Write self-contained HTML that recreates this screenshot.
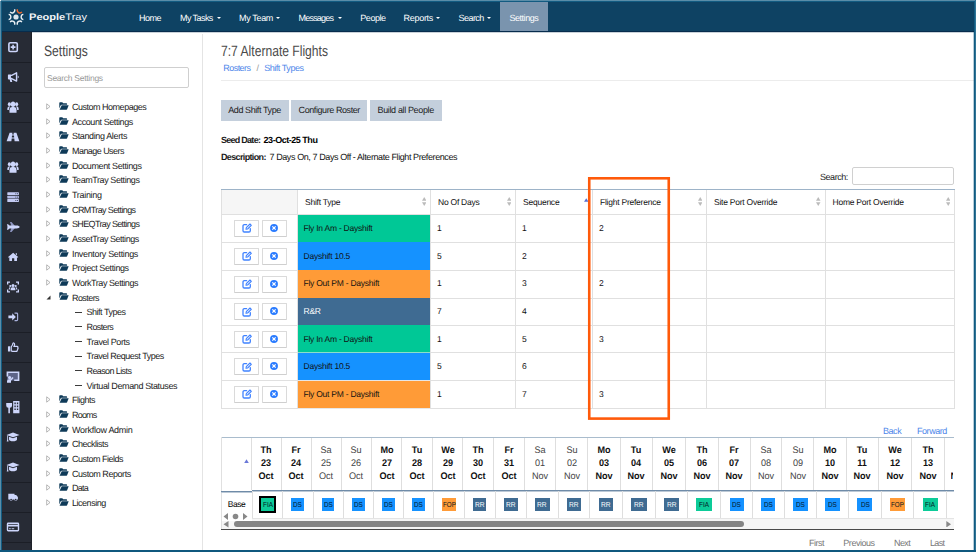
<!DOCTYPE html>
<html lang="en"><head><meta charset="utf-8"><title>PeopleTray - Settings - 7:7 Alternate Flights</title>
<style>
*{box-sizing:border-box;margin:0;padding:0}
html,body{width:976px;height:552px;overflow:hidden;background:#fff}
body{font-family:"Liberation Sans",sans-serif;color:#222;position:relative;text-rendering:geometricPrecision}
.abs{position:absolute}
.t{position:absolute;white-space:nowrap;line-height:1;transform-origin:0 50%}
.cab{font-size:9px;letter-spacing:-0.45px}
#nav{left:0;top:0;width:976px;height:32px;background:#0e4263}
#nav .t{color:#fff;font-size:9px;letter-spacing:-0.47px}
#side{left:0;top:32px;width:32px;height:520px;background:#272b35}
#side .c{position:absolute;left:0;width:32px;height:31px;border-bottom:1px solid #1b1e26}
#side svg{position:absolute;left:6px;top:8px;width:14px;height:14px;fill:#cdd6fb;stroke:none}
#panel{left:32px;top:32px;width:171px;height:520px;border-right:1px solid #e4e4e4;background:#fff}
.tree .t{color:#222}
.tbl{font-size:8.500px;letter-spacing:-0.240px;color:#111}
.cell{position:absolute;border-right:1px solid #ddd;border-bottom:1px solid #ddd}
.btn{position:absolute;background:#c4cfdc;height:21px;top:100px}
.abtn{position:absolute;width:25px;height:17px;border:1px solid #dadada;border-bottom-color:#cfcfcf;background:#fff;border-radius:1px}
.frame{position:absolute;z-index:50}
</style></head><body>

<div id="nav" class="abs">
<svg class="abs" style="left:6px;top:6.500px;width:20px;height:20px" viewBox="-10 -10 20 20"><circle cx="0" cy="0" r="2.600" fill="#dce6ee"/><path d="M7.34 2.57 A2.6 2.6 0 0 1 7.34 -2.57" fill="none" stroke="#eef3f7" stroke-width="1.350"/><path d="M1.44 7.64 A2.6 2.6 0 0 1 5.90 5.07" fill="none" stroke="#eef3f7" stroke-width="1.350"/><path d="M-5.90 5.07 A2.6 2.6 0 0 1 -1.44 7.64" fill="none" stroke="#eef3f7" stroke-width="1.350"/><path d="M-7.34 -2.57 A2.6 2.6 0 0 1 -7.34 2.57" fill="none" stroke="#eef3f7" stroke-width="1.350"/><path d="M-1.44 -7.64 A2.6 2.6 0 0 1 -5.90 -5.07" fill="none" stroke="#eef3f7" stroke-width="1.350"/><path d="M5.90 -5.07 A2.6 2.6 0 0 1 1.44 -7.64" fill="none" stroke="#f26a2e" stroke-width="1.350"/></svg>
<div class="t" style="left:28.700px;top:11.700px;font-size:9.400px;letter-spacing:0;transform:scaleX(1.18);color:#f2f5f8"><b>People</b>Tray</div>
<div class="abs" style="left:500px;top:2px;width:48px;height:29.5px;background:#7a94ae"></div>
<div class="abs" style="left:0;top:31px;width:976px;height:1px;background:#072c4d"></div>
<div class="abs" style="left:32px;top:32px;width:942px;height:1px;background:rgba(10,50,83,0.22);z-index:3"></div>
<div class="t" style="left:139px;top:13.900px;letter-spacing:-0.503px">Home</div>
<div class="t" style="left:180px;top:13.900px;letter-spacing:-0.577px">My Tasks</div>
<div class="abs" style="left:216.5px;top:16.800px;width:0;height:0;border-left:2px solid transparent;border-right:2px solid transparent;border-top:2.200px solid #fff"></div>
<div class="t" style="left:239px;top:13.900px;letter-spacing:-0.341px">My Team</div>
<div class="abs" style="left:276px;top:16.800px;width:0;height:0;border-left:2px solid transparent;border-right:2px solid transparent;border-top:2.200px solid #fff"></div>
<div class="t" style="left:298.5px;top:13.900px;letter-spacing:-0.789px">Messages</div>
<div class="abs" style="left:337.6px;top:16.800px;width:0;height:0;border-left:2px solid transparent;border-right:2px solid transparent;border-top:2.200px solid #fff"></div>
<div class="t" style="left:360.3px;top:13.900px;letter-spacing:-0.465px">People</div>
<div class="t" style="left:403.6px;top:13.900px;letter-spacing:-0.302px">Reports</div>
<div class="abs" style="left:436px;top:16.800px;width:0;height:0;border-left:2px solid transparent;border-right:2px solid transparent;border-top:2.200px solid #fff"></div>
<div class="t" style="left:458.6px;top:13.900px;letter-spacing:-0.563px">Search</div>
<div class="abs" style="left:487px;top:16.800px;width:0;height:0;border-left:2px solid transparent;border-right:2px solid transparent;border-top:2.200px solid #fff"></div>
<div class="t" style="left:509.4px;top:13.900px;letter-spacing:-0.446px">Settings</div>
</div>
<div id="side" class="abs">
<div class="abs" style="left:30.500px;top:0;width:1.500px;height:520px;background:#1e2129;z-index:2"></div>
<div class="c" style="top:0px"><svg viewBox="0 0 14 14"><rect x="2.900" y="2.700" width="8.400" height="8.800" rx="1.300" fill="none" stroke="#cdd6fb" stroke-width="1.600"/><path d="M6.300 4.700h1.600v1.600H9.500v1.600H7.900V9.500H6.300V7.900H4.700V6.300h1.600z"/></svg></div>
<div class="c" style="top:30px"><svg viewBox="0 0 14 14"><g transform="translate(.9 .8) scale(0.88)"><path d="M2 5.200h3.400L11 2.300v9.400L5.400 8.800H2z" fill="none" stroke="#cdd6fb" stroke-width="1.600" stroke-linejoin="round"/><rect x="1.200" y="4.400" width="3.400" height="5.200"/><path d="M3 9.200h2.200l.9 3.400H3.900z"/><path d="M12.300 5.400a1.700 1.700 0 0 1 0 3.200z"/></g></svg></div>
<div class="c" style="top:60px"><svg viewBox="0 0 14 14"><g transform="translate(.85 -.7) scale(0.88 1.1)"><circle cx="7" cy="4.600" r="2.500"/><circle cx="2.900" cy="4.400" r="1.800"/><circle cx="11.100" cy="4.400" r="1.800"/><path d="M3 12.200V10a3 3 0 0 1 3-3h2a3 3 0 0 1 3 3v2.200z"/><path d="M.6 9.800V8.600a2.300 2.300 0 0 1 3-2.100 4 4 0 0 0-1.300 3.300zM13.400 9.800V8.600a2.300 2.300 0 0 0-3-2.100 4 4 0 0 1 1.300 3.300z"/></g></svg></div>
<div class="c" style="top:90px"><svg viewBox="0 0 14 14"><path d="M3.6 2.8h2.8l-.2 1.6h1.6l-.2-1.6h2.8l3 8.4H8.6l-.3-2.6H5.7l-.3 2.6H.6z M6 5.4l-.2 2h2.4l-.2-2z" fill-rule="evenodd"/></svg></div>
<div class="c" style="top:120px"><svg viewBox="0 0 14 14"><g transform="translate(.85 -.7) scale(0.88 1.1)"><circle cx="7" cy="4.600" r="2.500"/><circle cx="2.900" cy="4.400" r="1.800"/><circle cx="11.100" cy="4.400" r="1.800"/><path d="M3 12.200V10a3 3 0 0 1 3-3h2a3 3 0 0 1 3 3v2.200z"/><path d="M.6 9.800V8.600a2.300 2.300 0 0 1 3-2.100 4 4 0 0 0-1.300 3.300zM13.400 9.800V8.600a2.300 2.300 0 0 0-3-2.100 4 4 0 0 1 1.300 3.300z"/></g></svg></div>
<div class="c" style="top:150px"><svg viewBox="0 0 14 14"><rect x="1.300" y="2.300" width="11.600" height="2.800" rx=".5" fill="#c3cbf3"/><rect x="1.300" y="5.700" width="11.600" height="2.800" rx=".5" fill="#b4bce6"/><rect x="1.300" y="9.100" width="11.600" height="2.800" rx=".5" fill="#c3cbf3"/><g fill="#4a5070"><rect x="9.300" y="3.200" width="1" height="1"/><rect x="11" y="3.200" width="1" height="1"/><rect x="9.300" y="6.600" width="1" height="1"/><rect x="11" y="6.600" width="1" height="1"/><rect x="9.300" y="10" width="1" height="1"/><rect x="11" y="10" width="1" height="1"/></g></svg></div>
<div class="c" style="top:180px"><svg viewBox="0 0 14 14"><path d="M5.400 6L4 1.900h1.500L9 6zM5.400 8L4 12.100h1.500L9 8z" fill="#8e96c2"/><path d="M2.200 5.600h8.400c1.600 0 3 .6 3 1.400s-1.400 1.400-3 1.400H2.200L1.500 7z"/><path d="M.9 4.300h1.300l1.300 1.500v2.400L2.200 9.700H.9L1.700 7z"/></svg></div>
<div class="c" style="top:210px"><svg viewBox="0 0 14 14"><g transform="translate(1.2 1) scale(0.85)"><path d="M7 2.2l6 5-.7.8-.8-.7v4.5H8.3V8.600H5.700v3.200H2.500V7.300l-.8.7L1 7.200z"/><path d="M10 2.600h1.500v2.300L10 3.700z"/></g></svg></div>
<div class="c" style="top:240px"><svg viewBox="0 0 14 14"><path d="M1 1.500h3v1.300H2.300V4.500H1zM13 1.500v3h-1.300V2.800H10V1.500zM1 12.500v-3h1.300v1.700H4v1.300zM13 12.500h-3v-1.300h1.700V9.500H13z"/><circle cx="7" cy="5.600" r="1.500"/><circle cx="4.300" cy="6" r="1.100"/><circle cx="9.700" cy="6" r="1.100"/><path d="M4.600 10.200V9a1.800 1.800 0 0 1 1.800-1.800h1.200A1.800 1.800 0 0 1 9.400 9v1.200zM2.800 9.600V8.800a1.500 1.500 0 0 1 1.700-1.400 2.600 2.600 0 0 0-.7 2.200zM11.200 9.600V8.800a1.500 1.500 0 0 0-1.700-1.400 2.600 2.600 0 0 1 .7 2.200z"/></svg></div>
<div class="c" style="top:270px"><svg viewBox="0 0 14 14"><g transform="translate(1.400 1.100) scale(0.83)"><path d="M5.800 2.600L10.200 7l-4.400 4.400V8.700H1.200V5.300h4.600z"/><path d="M8.600 1.800h2.600a1.800 1.800 0 0 1 1.800 1.800v6.800a1.800 1.800 0 0 1-1.800 1.800H8.600v-1.400h2.400a.6.600 0 0 0 .6-.6V3.800a.6.600 0 0 0-.6-.6H8.600z" fill="#aab2de"/></g></svg></div>
<div class="c" style="top:300px"><svg viewBox="0 0 14 14"><g transform="translate(1.100 1.200) scale(0.86)"><rect x="1" y="6" width="2.600" height="6" rx=".4"/><path d="M4.800 6.400c1.200-1 1.800-2.200 2-4 .1-.7 1.900-.5 1.900 1.200 0 .9-.3 1.700-.6 2.300h3.500c.8 0 1.300.9.900 1.600.4.500.3 1.200-.2 1.600.2.600 0 1.100-.5 1.400.1.800-.4 1.400-1.200 1.400H7.400c-.9 0-1.700-.3-2.600-.7z" fill="none" stroke="#cdd6fb" stroke-width="1.400"/></g></svg></div>
<div class="c" style="top:330px"><svg viewBox="0 0 14 14"><rect x="1.200" y="2.200" width="11.800" height="8.400" fill="#5d6488"/><path d="M.6 1.600h12.800v9.400H8.200V9.500h3.600V3.100H2.200v3.400H.6z"/><circle cx="3.600" cy="7.600" r="1.600"/><path d="M1 12.700v-1.400a2 2 0 0 1 2-2h1.400l2.200-2.200 1 1-2.600 2.700v1.900z"/></svg></div>
<div class="c" style="top:360px"><svg viewBox="0 0 14 14"><g transform="translate(-.9 -.8) scale(1.12)"><path d="M7.200 1.500h5.600v11H7.200z M8.300 3v1.500h1.200V3zM10.500 3v1.500h1.200V3zM8.300 5.600v1.500h1.200V5.600zM10.500 5.600v1.500h1.200V5.600zM8.300 8.200v1.500h1.200V8.200zM10.500 8.200v1.500h1.200V8.200z" fill-rule="evenodd"/><path d="M1 3.500h5.200v2.200a2 2 0 0 1-1.900 2v4.800H2.900V7.700a2 2 0 0 1-1.900-2z"/></g></svg></div>
<div class="c" style="top:390px"><svg viewBox="0 0 14 14"><path d="M7 2.500l6.500 2.400L7 7.300.5 4.900z"/><path d="M3 6.800l4 1.500 4-1.500v2.600c0 1-1.800 1.800-4 1.800s-4-.8-4-1.800z"/><path d="M1.200 5.600h.9v4l.5 1.900H.7l.5-1.900z"/></svg></div>
<div class="c" style="top:420px"><svg viewBox="0 0 14 14"><path d="M7 2.500l6.500 2.400L7 7.300.5 4.900z"/><path d="M3 6.800l4 1.500 4-1.500v2.600c0 1-1.800 1.800-4 1.800s-4-.8-4-1.800z"/><path d="M1.200 5.600h.9v4l.5 1.900H.7l.5-1.900z"/></svg></div>
<div class="c" style="top:450px"><svg viewBox="0 0 14 14"><g transform="translate(1.500 1.300) scale(0.8)"><path d="M1 3.200h7.800v1.400h2l2.200 2.500v3.100h-1a1.700 1.700 0 0 1-3.400 0H6.200a1.700 1.700 0 0 1-3.400 0H1z"/><circle cx="4.500" cy="10.300" r="1.100" fill="#272b35"/><circle cx="10.300" cy="10.300" r="1.100" fill="#272b35"/></g></svg></div>
<div class="c" style="top:480px"><svg viewBox="0 0 14 14"><path d="M2.200 2.500h9.600A1.400 1.400 0 0 1 13.200 3.900v6.200a1.400 1.400 0 0 1-1.400 1.400H2.200A1.400 1.400 0 0 1 .8 10.100V3.900a1.400 1.400 0 0 1 1.400-1.400z M2.200 6.600v3.500h9.600V6.600z M2.200 3.900v.9h9.600v-.9z" fill-rule="evenodd"/><rect x="3" y="8.300" width="1.800" height=".9"/><rect x="5.600" y="8.300" width="2.600" height=".9"/></svg></div>
</div>
<div id="panel" class="abs"></div><div class="abs" style="left:202px;top:32px;width:2px;height:2px;background:#fff"></div>
<div class="t" style="left:43.5px;top:43.900px;font-size:15px;color:#484848;transform:scaleX(0.81)">Settings</div>
<div class="abs" style="left:44px;top:67px;width:145px;height:20.500px;border:1px solid #cfcfcf;border-radius:2px"></div>
<div class="t" style="left:47px;top:74px;font-size:8.500px;letter-spacing:-0.280px;color:#999">Search Settings</div>
<div class="tree">
<svg class="abs" style="left:46px;top:103.00px;width:5px;height:7px" viewBox="0 0 5 7"><path d="M.7 .8L4 3.500.7 6.200z" fill="#fff" stroke="#999" stroke-width=".7"/></svg>
<svg class="abs" style="left:58.6px;top:101.90px;width:10px;height:8px" viewBox="0 0 10 8"><path d="M.3 6.600V1A.7.700 0 0 1 1 .3h2.300l.9.900h3.200a.7.700 0 0 1 .7.700v.8H2.600a1 1 0 0 0-.9.600z" fill="#0e3a58"/><path d="M2.700 3.300h7L8.100 7.300a.7.700 0 0 1-.6.400H.6z" fill="#0e3a58"/></svg>
<div class="t cab" style="left:72px;top:103.00px;letter-spacing:-0.489px">Custom Homepages</div>
<svg class="abs" style="left:46px;top:117.66px;width:5px;height:7px" viewBox="0 0 5 7"><path d="M.7 .8L4 3.500.7 6.200z" fill="#fff" stroke="#999" stroke-width=".7"/></svg>
<svg class="abs" style="left:58.6px;top:116.56px;width:10px;height:8px" viewBox="0 0 10 8"><path d="M.3 6.600V1A.7.700 0 0 1 1 .3h2.300l.9.900h3.200a.7.700 0 0 1 .7.700v.8H2.600a1 1 0 0 0-.9.600z" fill="#0e3a58"/><path d="M2.700 3.300h7L8.100 7.300a.7.700 0 0 1-.6.400H.6z" fill="#0e3a58"/></svg>
<div class="t cab" style="left:72px;top:117.66px;letter-spacing:-0.416px">Account Settings</div>
<svg class="abs" style="left:46px;top:132.32px;width:5px;height:7px" viewBox="0 0 5 7"><path d="M.7 .8L4 3.500.7 6.200z" fill="#fff" stroke="#999" stroke-width=".7"/></svg>
<svg class="abs" style="left:58.6px;top:131.22px;width:10px;height:8px" viewBox="0 0 10 8"><path d="M.3 6.600V1A.7.700 0 0 1 1 .3h2.300l.9.900h3.200a.7.700 0 0 1 .7.700v.8H2.600a1 1 0 0 0-.9.600z" fill="#0e3a58"/><path d="M2.700 3.300h7L8.100 7.300a.7.700 0 0 1-.6.400H.6z" fill="#0e3a58"/></svg>
<div class="t cab" style="left:72px;top:132.32px;letter-spacing:-0.367px">Standing Alerts</div>
<svg class="abs" style="left:46px;top:146.98px;width:5px;height:7px" viewBox="0 0 5 7"><path d="M.7 .8L4 3.500.7 6.200z" fill="#fff" stroke="#999" stroke-width=".7"/></svg>
<svg class="abs" style="left:58.6px;top:145.88px;width:10px;height:8px" viewBox="0 0 10 8"><path d="M.3 6.600V1A.7.700 0 0 1 1 .3h2.300l.9.900h3.200a.7.700 0 0 1 .7.700v.8H2.600a1 1 0 0 0-.9.600z" fill="#0e3a58"/><path d="M2.700 3.300h7L8.100 7.300a.7.700 0 0 1-.6.400H.6z" fill="#0e3a58"/></svg>
<div class="t cab" style="left:72px;top:146.98px;letter-spacing:-0.557px">Manage Users</div>
<svg class="abs" style="left:46px;top:161.64px;width:5px;height:7px" viewBox="0 0 5 7"><path d="M.7 .8L4 3.500.7 6.200z" fill="#fff" stroke="#999" stroke-width=".7"/></svg>
<svg class="abs" style="left:58.6px;top:160.54px;width:10px;height:8px" viewBox="0 0 10 8"><path d="M.3 6.600V1A.7.700 0 0 1 1 .3h2.300l.9.900h3.200a.7.700 0 0 1 .7.700v.8H2.600a1 1 0 0 0-.9.600z" fill="#0e3a58"/><path d="M2.700 3.300h7L8.100 7.300a.7.700 0 0 1-.6.400H.6z" fill="#0e3a58"/></svg>
<div class="t cab" style="left:72px;top:161.64px;letter-spacing:-0.378px">Document Settings</div>
<svg class="abs" style="left:46px;top:176.30px;width:5px;height:7px" viewBox="0 0 5 7"><path d="M.7 .8L4 3.500.7 6.200z" fill="#fff" stroke="#999" stroke-width=".7"/></svg>
<svg class="abs" style="left:58.6px;top:175.20px;width:10px;height:8px" viewBox="0 0 10 8"><path d="M.3 6.600V1A.7.700 0 0 1 1 .3h2.300l.9.900h3.200a.7.700 0 0 1 .7.700v.8H2.600a1 1 0 0 0-.9.600z" fill="#0e3a58"/><path d="M2.700 3.300h7L8.100 7.300a.7.700 0 0 1-.6.400H.6z" fill="#0e3a58"/></svg>
<div class="t cab" style="left:72px;top:176.30px;letter-spacing:-0.425px">TeamTray Settings</div>
<svg class="abs" style="left:46px;top:190.96px;width:5px;height:7px" viewBox="0 0 5 7"><path d="M.7 .8L4 3.500.7 6.200z" fill="#fff" stroke="#999" stroke-width=".7"/></svg>
<svg class="abs" style="left:58.6px;top:189.86px;width:10px;height:8px" viewBox="0 0 10 8"><path d="M.3 6.600V1A.7.700 0 0 1 1 .3h2.300l.9.900h3.200a.7.700 0 0 1 .7.700v.8H2.600a1 1 0 0 0-.9.600z" fill="#0e3a58"/><path d="M2.700 3.300h7L8.100 7.300a.7.700 0 0 1-.6.400H.6z" fill="#0e3a58"/></svg>
<div class="t cab" style="left:72px;top:190.96px;letter-spacing:-0.312px">Training</div>
<svg class="abs" style="left:46px;top:205.62px;width:5px;height:7px" viewBox="0 0 5 7"><path d="M.7 .8L4 3.500.7 6.200z" fill="#fff" stroke="#999" stroke-width=".7"/></svg>
<svg class="abs" style="left:58.6px;top:204.52px;width:10px;height:8px" viewBox="0 0 10 8"><path d="M.3 6.600V1A.7.700 0 0 1 1 .3h2.300l.9.900h3.200a.7.700 0 0 1 .7.700v.8H2.600a1 1 0 0 0-.9.600z" fill="#0e3a58"/><path d="M2.700 3.300h7L8.100 7.300a.7.700 0 0 1-.6.400H.6z" fill="#0e3a58"/></svg>
<div class="t cab" style="left:72px;top:205.62px;letter-spacing:-0.606px">CRMTray Settings</div>
<svg class="abs" style="left:46px;top:220.28px;width:5px;height:7px" viewBox="0 0 5 7"><path d="M.7 .8L4 3.500.7 6.200z" fill="#fff" stroke="#999" stroke-width=".7"/></svg>
<svg class="abs" style="left:58.6px;top:219.18px;width:10px;height:8px" viewBox="0 0 10 8"><path d="M.3 6.600V1A.7.700 0 0 1 1 .3h2.300l.9.900h3.200a.7.700 0 0 1 .7.700v.8H2.600a1 1 0 0 0-.9.600z" fill="#0e3a58"/><path d="M2.700 3.300h7L8.100 7.300a.7.700 0 0 1-.6.400H.6z" fill="#0e3a58"/></svg>
<div class="t cab" style="left:72px;top:220.28px;letter-spacing:-0.643px">SHEQTray Settings</div>
<svg class="abs" style="left:46px;top:234.94px;width:5px;height:7px" viewBox="0 0 5 7"><path d="M.7 .8L4 3.500.7 6.200z" fill="#fff" stroke="#999" stroke-width=".7"/></svg>
<svg class="abs" style="left:58.6px;top:233.84px;width:10px;height:8px" viewBox="0 0 10 8"><path d="M.3 6.600V1A.7.700 0 0 1 1 .3h2.300l.9.900h3.200a.7.700 0 0 1 .7.700v.8H2.600a1 1 0 0 0-.9.600z" fill="#0e3a58"/><path d="M2.700 3.300h7L8.100 7.300a.7.700 0 0 1-.6.400H.6z" fill="#0e3a58"/></svg>
<div class="t cab" style="left:72px;top:234.94px;letter-spacing:-0.47px">AssetTray Settings</div>
<svg class="abs" style="left:46px;top:249.60px;width:5px;height:7px" viewBox="0 0 5 7"><path d="M.7 .8L4 3.500.7 6.200z" fill="#fff" stroke="#999" stroke-width=".7"/></svg>
<svg class="abs" style="left:58.6px;top:248.50px;width:10px;height:8px" viewBox="0 0 10 8"><path d="M.3 6.600V1A.7.700 0 0 1 1 .3h2.300l.9.900h3.200a.7.700 0 0 1 .7.700v.8H2.600a1 1 0 0 0-.9.600z" fill="#0e3a58"/><path d="M2.700 3.300h7L8.100 7.300a.7.700 0 0 1-.6.400H.6z" fill="#0e3a58"/></svg>
<div class="t cab" style="left:72px;top:249.60px;letter-spacing:-0.338px">Inventory Settings</div>
<svg class="abs" style="left:46px;top:264.26px;width:5px;height:7px" viewBox="0 0 5 7"><path d="M.7 .8L4 3.500.7 6.200z" fill="#fff" stroke="#999" stroke-width=".7"/></svg>
<svg class="abs" style="left:58.6px;top:263.16px;width:10px;height:8px" viewBox="0 0 10 8"><path d="M.3 6.600V1A.7.700 0 0 1 1 .3h2.300l.9.900h3.200a.7.700 0 0 1 .7.700v.8H2.600a1 1 0 0 0-.9.600z" fill="#0e3a58"/><path d="M2.700 3.300h7L8.100 7.300a.7.700 0 0 1-.6.400H.6z" fill="#0e3a58"/></svg>
<div class="t cab" style="left:72px;top:264.26px;letter-spacing:-0.395px">Project Settings</div>
<svg class="abs" style="left:46px;top:278.92px;width:5px;height:7px" viewBox="0 0 5 7"><path d="M.7 .8L4 3.500.7 6.200z" fill="#fff" stroke="#999" stroke-width=".7"/></svg>
<svg class="abs" style="left:58.6px;top:277.82px;width:10px;height:8px" viewBox="0 0 10 8"><path d="M.3 6.600V1A.7.700 0 0 1 1 .3h2.300l.9.900h3.200a.7.700 0 0 1 .7.700v.8H2.600a1 1 0 0 0-.9.600z" fill="#0e3a58"/><path d="M2.700 3.300h7L8.100 7.300a.7.700 0 0 1-.6.400H.6z" fill="#0e3a58"/></svg>
<div class="t cab" style="left:72px;top:278.92px;letter-spacing:-0.439px">WorkTray Settings</div>
<svg class="abs" style="left:45.500px;top:294.88px;width:5px;height:5px" viewBox="0 0 5 5"><path d="M4.500 .5V4.500H.5z" fill="#333"/></svg>
<svg class="abs" style="left:58.6px;top:292.48px;width:10px;height:8px" viewBox="0 0 10 8"><path d="M.3 6.600V1A.7.700 0 0 1 1 .3h2.300l.9.900h3.200a.7.700 0 0 1 .7.700v.8H2.600a1 1 0 0 0-.9.600z" fill="#0e3a58"/><path d="M2.700 3.300h7L8.100 7.300a.7.700 0 0 1-.6.400H.6z" fill="#0e3a58"/></svg>
<div class="t cab" style="left:72px;top:293.58px;letter-spacing:-0.568px">Rosters</div>
<div class="abs" style="left:75px;top:312px;width:6.500px;height:1px;background:#3c3c3c"></div>
<div class="t cab" style="left:86.500px;top:308.24px;letter-spacing:-0.476px">Shift Types</div>
<div class="abs" style="left:75px;top:326px;width:6.500px;height:1px;background:#3c3c3c"></div>
<div class="t cab" style="left:86.500px;top:322.90px;letter-spacing:-0.618px">Rosters</div>
<div class="abs" style="left:75px;top:341px;width:6.500px;height:1px;background:#3c3c3c"></div>
<div class="t cab" style="left:86.500px;top:337.56px;letter-spacing:-0.416px">Travel Ports</div>
<div class="abs" style="left:75px;top:356px;width:6.500px;height:1px;background:#3c3c3c"></div>
<div class="t cab" style="left:86.500px;top:352.22px;letter-spacing:-0.492px">Travel Request Types</div>
<div class="abs" style="left:75px;top:370px;width:6.500px;height:1px;background:#3c3c3c"></div>
<div class="t cab" style="left:86.500px;top:366.88px;letter-spacing:-0.603px">Reason Lists</div>
<div class="abs" style="left:75px;top:385px;width:6.500px;height:1px;background:#3c3c3c"></div>
<div class="t cab" style="left:86.500px;top:381.54px;letter-spacing:-0.381px">Virtual Demand Statuses</div>
<svg class="abs" style="left:46px;top:396.20px;width:5px;height:7px" viewBox="0 0 5 7"><path d="M.7 .8L4 3.500.7 6.200z" fill="#fff" stroke="#999" stroke-width=".7"/></svg>
<svg class="abs" style="left:58.6px;top:395.10px;width:10px;height:8px" viewBox="0 0 10 8"><path d="M.3 6.600V1A.7.700 0 0 1 1 .3h2.300l.9.900h3.200a.7.700 0 0 1 .7.700v.8H2.600a1 1 0 0 0-.9.600z" fill="#0e3a58"/><path d="M2.700 3.300h7L8.100 7.300a.7.700 0 0 1-.6.400H.6z" fill="#0e3a58"/></svg>
<div class="t cab" style="left:72px;top:396.20px;letter-spacing:-0.485px">Flights</div>
<svg class="abs" style="left:46px;top:410.86px;width:5px;height:7px" viewBox="0 0 5 7"><path d="M.7 .8L4 3.500.7 6.200z" fill="#fff" stroke="#999" stroke-width=".7"/></svg>
<svg class="abs" style="left:58.6px;top:409.76px;width:10px;height:8px" viewBox="0 0 10 8"><path d="M.3 6.600V1A.7.700 0 0 1 1 .3h2.300l.9.900h3.200a.7.700 0 0 1 .7.700v.8H2.600a1 1 0 0 0-.9.600z" fill="#0e3a58"/><path d="M2.700 3.300h7L8.100 7.300a.7.700 0 0 1-.6.400H.6z" fill="#0e3a58"/></svg>
<div class="t cab" style="left:72px;top:410.86px;letter-spacing:-0.802px">Rooms</div>
<svg class="abs" style="left:46px;top:425.52px;width:5px;height:7px" viewBox="0 0 5 7"><path d="M.7 .8L4 3.500.7 6.200z" fill="#fff" stroke="#999" stroke-width=".7"/></svg>
<svg class="abs" style="left:58.6px;top:424.42px;width:10px;height:8px" viewBox="0 0 10 8"><path d="M.3 6.600V1A.7.700 0 0 1 1 .3h2.300l.9.900h3.200a.7.700 0 0 1 .7.700v.8H2.600a1 1 0 0 0-.9.600z" fill="#0e3a58"/><path d="M2.700 3.300h7L8.100 7.300a.7.700 0 0 1-.6.400H.6z" fill="#0e3a58"/></svg>
<div class="t cab" style="left:72px;top:425.52px;letter-spacing:-0.274px">Workflow Admin</div>
<svg class="abs" style="left:46px;top:440.18px;width:5px;height:7px" viewBox="0 0 5 7"><path d="M.7 .8L4 3.500.7 6.200z" fill="#fff" stroke="#999" stroke-width=".7"/></svg>
<svg class="abs" style="left:58.6px;top:439.08px;width:10px;height:8px" viewBox="0 0 10 8"><path d="M.3 6.600V1A.7.700 0 0 1 1 .3h2.300l.9.900h3.200a.7.700 0 0 1 .7.700v.8H2.600a1 1 0 0 0-.9.600z" fill="#0e3a58"/><path d="M2.700 3.300h7L8.100 7.300a.7.700 0 0 1-.6.400H.6z" fill="#0e3a58"/></svg>
<div class="t cab" style="left:72px;top:440.18px;letter-spacing:-0.49px">Checklists</div>
<svg class="abs" style="left:46px;top:454.84px;width:5px;height:7px" viewBox="0 0 5 7"><path d="M.7 .8L4 3.500.7 6.200z" fill="#fff" stroke="#999" stroke-width=".7"/></svg>
<svg class="abs" style="left:58.6px;top:453.74px;width:10px;height:8px" viewBox="0 0 10 8"><path d="M.3 6.600V1A.7.700 0 0 1 1 .3h2.300l.9.900h3.200a.7.700 0 0 1 .7.700v.8H2.600a1 1 0 0 0-.9.600z" fill="#0e3a58"/><path d="M2.700 3.300h7L8.100 7.300a.7.700 0 0 1-.6.400H.6z" fill="#0e3a58"/></svg>
<div class="t cab" style="left:72px;top:454.84px;letter-spacing:-0.51px">Custom Fields</div>
<svg class="abs" style="left:46px;top:469.50px;width:5px;height:7px" viewBox="0 0 5 7"><path d="M.7 .8L4 3.500.7 6.200z" fill="#fff" stroke="#999" stroke-width=".7"/></svg>
<svg class="abs" style="left:58.6px;top:468.40px;width:10px;height:8px" viewBox="0 0 10 8"><path d="M.3 6.600V1A.7.700 0 0 1 1 .3h2.300l.9.900h3.200a.7.700 0 0 1 .7.700v.8H2.600a1 1 0 0 0-.9.600z" fill="#0e3a58"/><path d="M2.700 3.300h7L8.100 7.300a.7.700 0 0 1-.6.400H.6z" fill="#0e3a58"/></svg>
<div class="t cab" style="left:72px;top:469.50px;letter-spacing:-0.448px">Custom Reports</div>
<svg class="abs" style="left:46px;top:484.16px;width:5px;height:7px" viewBox="0 0 5 7"><path d="M.7 .8L4 3.500.7 6.200z" fill="#fff" stroke="#999" stroke-width=".7"/></svg>
<svg class="abs" style="left:58.6px;top:483.06px;width:10px;height:8px" viewBox="0 0 10 8"><path d="M.3 6.600V1A.7.700 0 0 1 1 .3h2.300l.9.900h3.200a.7.700 0 0 1 .7.700v.8H2.600a1 1 0 0 0-.9.600z" fill="#0e3a58"/><path d="M2.700 3.300h7L8.100 7.300a.7.700 0 0 1-.6.400H.6z" fill="#0e3a58"/></svg>
<div class="t cab" style="left:72px;top:484.16px;letter-spacing:-0.737px">Data</div>
<svg class="abs" style="left:46px;top:498.82px;width:5px;height:7px" viewBox="0 0 5 7"><path d="M.7 .8L4 3.500.7 6.200z" fill="#fff" stroke="#999" stroke-width=".7"/></svg>
<svg class="abs" style="left:58.6px;top:497.72px;width:10px;height:8px" viewBox="0 0 10 8"><path d="M.3 6.600V1A.7.700 0 0 1 1 .3h2.300l.9.900h3.200a.7.700 0 0 1 .7.700v.8H2.600a1 1 0 0 0-.9.600z" fill="#0e3a58"/><path d="M2.700 3.300h7L8.100 7.300a.7.700 0 0 1-.6.400H.6z" fill="#0e3a58"/></svg>
<div class="t cab" style="left:72px;top:498.82px;letter-spacing:-0.478px">Licensing</div>
</div>
<div class="t" style="left:221px;top:44px;font-size:15px;color:#4a4a4a;transform:scaleX(0.807)">7:7 Alternate Flights</div>
<div class="t" style="left:223.3px;top:64px;font-size:9px;letter-spacing:-0.551px;color:#4d86ea;">Rosters</div>
<div class="t" style="left:256.5px;top:64px;font-size:9px;letter-spacing:-0.42px;color:#999;">/</div>
<div class="t" style="left:264.2px;top:64px;font-size:9px;letter-spacing:-0.456px;color:#4d86ea;">Shift Types</div>
<div class="abs" style="left:221px;top:80px;width:753px;height:1px;background:#ececec"></div>
<div class="btn" style="left:221px;width:67.5px"></div>
<div class="t" style="left:228.2px;top:106.2px;font-size:9px;letter-spacing:-0.406px;color:#1c1c1c;">Add Shift Type</div>
<div class="btn" style="left:291px;width:76.4px"></div>
<div class="t" style="left:298.6px;top:106.2px;font-size:9px;letter-spacing:-0.422px;color:#1c1c1c;">Configure Roster</div>
<div class="btn" style="left:370px;width:71.5px"></div>
<div class="t" style="left:377.5px;top:106.2px;font-size:9px;letter-spacing:-0.356px;color:#1c1c1c;">Build all People</div>
<div class="t" style="left:221px;top:135.8px;font-size:9px;font-weight:bold;letter-spacing:-0.735px;color:#1a1a1a;">Seed Date:</div>
<div class="t" style="left:263.6px;top:135.8px;font-size:9px;font-weight:bold;letter-spacing:-0.476px;color:#000;">23-Oct-25 Thu</div>
<div class="t" style="left:221px;top:153px;font-size:9px;font-weight:bold;letter-spacing:-0.646px;color:#1a1a1a;">Description:</div>
<div class="t" style="left:269.5px;top:153px;font-size:9px;letter-spacing:-0.41px;color:#111;">7 Days On, 7 Days Off - Alternate Flight Preferences</div>
<div class="t" style="left:820px;top:172.8px;font-size:9px;letter-spacing:-0.453px;color:#222;">Search:</div>
<div class="abs" style="left:852px;top:167px;width:102px;height:17.500px;border:1px solid #d0d0d0;border-radius:2px"></div>
<div class="tbl">
<div class="abs" style="left:221px;top:189px;width:733.500px;height:1px;background:#9db3c8"></div>
<div class="abs" style="left:221px;top:190px;width:76.500px;height:24.500px;background:#f6f6f6"></div>
<div class="abs" style="left:220.5px;top:189.500px;width:1px;height:219.3px;background:#e0e0e0"></div>
<div class="abs" style="left:297.0px;top:189.500px;width:1px;height:219.3px;background:#e0e0e0"></div>
<div class="abs" style="left:430.0px;top:189.500px;width:1px;height:219.3px;background:#e0e0e0"></div>
<div class="abs" style="left:515.0px;top:189.500px;width:1px;height:219.3px;background:#e0e0e0"></div>
<div class="abs" style="left:592.0px;top:189.500px;width:1px;height:219.3px;background:#e0e0e0"></div>
<div class="abs" style="left:706.0px;top:189.500px;width:1px;height:219.3px;background:#e0e0e0"></div>
<div class="abs" style="left:824.5px;top:189.500px;width:1px;height:219.3px;background:#e0e0e0"></div>
<div class="abs" style="left:954.0px;top:189.500px;width:1px;height:219.3px;background:#e0e0e0"></div>
<div class="abs" style="left:221px;top:214.0px;width:733.500px;height:1px;background:#e0e0e0"></div>
<div class="abs" style="left:221px;top:241.9px;width:733.500px;height:1px;background:#e0e0e0"></div>
<div class="abs" style="left:221px;top:269.8px;width:733.500px;height:1px;background:#e0e0e0"></div>
<div class="abs" style="left:221px;top:297.6px;width:733.500px;height:1px;background:#e0e0e0"></div>
<div class="abs" style="left:221px;top:324.8px;width:733.500px;height:1px;background:#e0e0e0"></div>
<div class="abs" style="left:221px;top:352.4px;width:733.500px;height:1px;background:#e0e0e0"></div>
<div class="abs" style="left:221px;top:380.0px;width:733.500px;height:1px;background:#e0e0e0"></div>
<div class="abs" style="left:221px;top:407.8px;width:733.500px;height:1px;background:#e0e0e0"></div>
<div class="t" style="left:305.0px;top:197.800px">Shift Type</div>
<svg class="abs" style="left:421.8px;top:196.800px;width:4.500px;height:9px" viewBox="0 0 5 9" preserveAspectRatio="none"><path d="M2.500 0L5 3.800H0z" fill="#bbb"/><path d="M2.500 9L5 5.200H0z" fill="#bbb"/></svg>
<div class="t" style="left:438.0px;top:197.800px">No Of Days</div>
<svg class="abs" style="left:506.8px;top:196.800px;width:4.500px;height:9px" viewBox="0 0 5 9" preserveAspectRatio="none"><path d="M2.500 0L5 3.800H0z" fill="#bbb"/><path d="M2.500 9L5 5.200H0z" fill="#bbb"/></svg>
<div class="t" style="left:523.0px;top:197.800px">Sequence</div>
<svg class="abs" style="left:583.5px;top:197.500px;width:4.500px;height:4px" viewBox="0 0 5 4"><path d="M2.500 0L5 4H0z" fill="#5a6fd0"/></svg>
<div class="t" style="left:600.0px;top:197.800px">Flight Preference</div>
<svg class="abs" style="left:697.8px;top:196.800px;width:4.500px;height:9px" viewBox="0 0 5 9" preserveAspectRatio="none"><path d="M2.500 0L5 3.800H0z" fill="#bbb"/><path d="M2.500 9L5 5.200H0z" fill="#bbb"/></svg>
<div class="t" style="left:714.0px;top:197.800px">Site Port Override</div>
<svg class="abs" style="left:816.3px;top:196.800px;width:4.500px;height:9px" viewBox="0 0 5 9" preserveAspectRatio="none"><path d="M2.500 0L5 3.800H0z" fill="#bbb"/><path d="M2.500 9L5 5.200H0z" fill="#bbb"/></svg>
<div class="t" style="left:832.5px;top:197.800px">Home Port Override</div>
<svg class="abs" style="left:945.8px;top:196.800px;width:4.500px;height:9px" viewBox="0 0 5 9" preserveAspectRatio="none"><path d="M2.500 0L5 3.800H0z" fill="#bbb"/><path d="M2.500 9L5 5.200H0z" fill="#bbb"/></svg>
<div class="abs" style="left:297.5px;top:214.5px;width:132.5px;height:27.900000000000006px;background:#00c896"></div>
<div class="abs" style="left:297.5px;top:241.9px;width:132.5px;height:1px;background:rgba(235,235,235,0.6)"></div>
<div class="abtn" style="left:234px;top:219.95px"><svg class="abs" style="left:6.500px;top:2.500px;width:10px;height:10px" viewBox="0 0 10 10" fill="none" stroke="#3f82ff" stroke-width="1.300" stroke-linecap="round" stroke-linejoin="round"><path d="M4.600 1.700H2.300A1.300 1.300 0 0 0 1 3v4.700A1.300 1.300 0 0 0 2.300 9H7a1.300 1.300 0 0 0 1.300-1.300V5.600"/><path d="M4 6.300l.3-1.600L8 1l1.300 1.300L5.600 6z" stroke-width="1.100"/></svg></div>
<div class="abtn" style="left:262px;top:219.95px"><svg class="abs" style="left:7px;top:3px;width:8px;height:8px" viewBox="0 0 8 8"><circle cx="4" cy="4" r="3.950" fill="#2b7cff"/><path d="M2.350 2.350l3.300 3.300M5.650 2.350l-3.300 3.300" stroke="#fff" stroke-width="1.250" fill="none"/></svg></div>
<div class="t" style="left:303.5px;top:224.10px;color:#111">Fly In Am - Dayshift</div>
<div class="t" style="left:437.0px;top:224.10px">1</div>
<div class="t" style="left:522.0px;top:224.10px">1</div>
<div class="t" style="left:599.0px;top:224.10px">2</div>
<div class="abs" style="left:297.5px;top:242.4px;width:132.5px;height:27.900000000000006px;background:#1592ff"></div>
<div class="abs" style="left:297.5px;top:269.8px;width:132.5px;height:1px;background:rgba(235,235,235,0.6)"></div>
<div class="abtn" style="left:234px;top:247.85px"><svg class="abs" style="left:6.500px;top:2.500px;width:10px;height:10px" viewBox="0 0 10 10" fill="none" stroke="#3f82ff" stroke-width="1.300" stroke-linecap="round" stroke-linejoin="round"><path d="M4.600 1.700H2.300A1.300 1.300 0 0 0 1 3v4.700A1.300 1.300 0 0 0 2.300 9H7a1.300 1.300 0 0 0 1.300-1.300V5.600"/><path d="M4 6.300l.3-1.600L8 1l1.300 1.300L5.600 6z" stroke-width="1.100"/></svg></div>
<div class="abtn" style="left:262px;top:247.85px"><svg class="abs" style="left:7px;top:3px;width:8px;height:8px" viewBox="0 0 8 8"><circle cx="4" cy="4" r="3.950" fill="#2b7cff"/><path d="M2.350 2.350l3.300 3.300M5.650 2.350l-3.300 3.300" stroke="#fff" stroke-width="1.250" fill="none"/></svg></div>
<div class="t" style="left:303.5px;top:251.90px;color:#111">Dayshift 10.5</div>
<div class="t" style="left:437.0px;top:251.90px">5</div>
<div class="t" style="left:522.0px;top:251.90px">2</div>
<div class="abs" style="left:297.5px;top:270.3px;width:132.5px;height:27.80000000000001px;background:#ff9b37"></div>
<div class="abs" style="left:297.5px;top:297.6px;width:132.5px;height:1px;background:rgba(235,235,235,0.6)"></div>
<div class="abtn" style="left:234px;top:275.70px"><svg class="abs" style="left:6.500px;top:2.500px;width:10px;height:10px" viewBox="0 0 10 10" fill="none" stroke="#3f82ff" stroke-width="1.300" stroke-linecap="round" stroke-linejoin="round"><path d="M4.600 1.700H2.300A1.300 1.300 0 0 0 1 3v4.700A1.300 1.300 0 0 0 2.300 9H7a1.300 1.300 0 0 0 1.300-1.300V5.600"/><path d="M4 6.300l.3-1.600L8 1l1.300 1.300L5.600 6z" stroke-width="1.100"/></svg></div>
<div class="abtn" style="left:262px;top:275.70px"><svg class="abs" style="left:7px;top:3px;width:8px;height:8px" viewBox="0 0 8 8"><circle cx="4" cy="4" r="3.950" fill="#2b7cff"/><path d="M2.350 2.350l3.300 3.300M5.650 2.350l-3.300 3.300" stroke="#fff" stroke-width="1.250" fill="none"/></svg></div>
<div class="t" style="left:303.5px;top:279.20px;color:#111">Fly Out PM - Dayshift</div>
<div class="t" style="left:437.0px;top:279.20px">1</div>
<div class="t" style="left:522.0px;top:279.20px">3</div>
<div class="t" style="left:599.0px;top:279.20px">2</div>
<div class="abs" style="left:297.5px;top:298.1px;width:132.5px;height:27.19999999999999px;background:#3f6b92"></div>
<div class="abs" style="left:297.5px;top:324.8px;width:132.5px;height:1px;background:rgba(235,235,235,0.6)"></div>
<div class="abtn" style="left:234px;top:303.20px"><svg class="abs" style="left:6.500px;top:2.500px;width:10px;height:10px" viewBox="0 0 10 10" fill="none" stroke="#3f82ff" stroke-width="1.300" stroke-linecap="round" stroke-linejoin="round"><path d="M4.600 1.700H2.300A1.300 1.300 0 0 0 1 3v4.700A1.300 1.300 0 0 0 2.300 9H7a1.300 1.300 0 0 0 1.300-1.300V5.600"/><path d="M4 6.300l.3-1.600L8 1l1.300 1.300L5.600 6z" stroke-width="1.100"/></svg></div>
<div class="abtn" style="left:262px;top:303.20px"><svg class="abs" style="left:7px;top:3px;width:8px;height:8px" viewBox="0 0 8 8"><circle cx="4" cy="4" r="3.950" fill="#2b7cff"/><path d="M2.350 2.350l3.300 3.300M5.650 2.350l-3.300 3.300" stroke="#fff" stroke-width="1.250" fill="none"/></svg></div>
<div class="t" style="left:303.5px;top:306.90px;color:#fff">R&amp;R</div>
<div class="t" style="left:437.0px;top:306.90px">7</div>
<div class="t" style="left:522.0px;top:306.90px">4</div>
<div class="abs" style="left:297.5px;top:325.3px;width:132.5px;height:27.599999999999966px;background:#00c896"></div>
<div class="abs" style="left:297.5px;top:352.4px;width:132.5px;height:1px;background:rgba(235,235,235,0.6)"></div>
<div class="abtn" style="left:234px;top:330.60px"><svg class="abs" style="left:6.500px;top:2.500px;width:10px;height:10px" viewBox="0 0 10 10" fill="none" stroke="#3f82ff" stroke-width="1.300" stroke-linecap="round" stroke-linejoin="round"><path d="M4.600 1.700H2.300A1.300 1.300 0 0 0 1 3v4.700A1.300 1.300 0 0 0 2.300 9H7a1.300 1.300 0 0 0 1.300-1.300V5.600"/><path d="M4 6.300l.3-1.600L8 1l1.300 1.300L5.600 6z" stroke-width="1.100"/></svg></div>
<div class="abtn" style="left:262px;top:330.60px"><svg class="abs" style="left:7px;top:3px;width:8px;height:8px" viewBox="0 0 8 8"><circle cx="4" cy="4" r="3.950" fill="#2b7cff"/><path d="M2.350 2.350l3.300 3.300M5.650 2.350l-3.300 3.300" stroke="#fff" stroke-width="1.250" fill="none"/></svg></div>
<div class="t" style="left:303.5px;top:334.50px;color:#111">Fly In Am - Dayshift</div>
<div class="t" style="left:437.0px;top:334.50px">1</div>
<div class="t" style="left:522.0px;top:334.50px">5</div>
<div class="t" style="left:599.0px;top:334.50px">3</div>
<div class="abs" style="left:297.5px;top:352.9px;width:132.5px;height:27.600000000000023px;background:#1592ff"></div>
<div class="abs" style="left:297.5px;top:380.0px;width:132.5px;height:1px;background:rgba(235,235,235,0.6)"></div>
<div class="abtn" style="left:234px;top:358.20px"><svg class="abs" style="left:6.500px;top:2.500px;width:10px;height:10px" viewBox="0 0 10 10" fill="none" stroke="#3f82ff" stroke-width="1.300" stroke-linecap="round" stroke-linejoin="round"><path d="M4.600 1.700H2.300A1.300 1.300 0 0 0 1 3v4.700A1.300 1.300 0 0 0 2.300 9H7a1.300 1.300 0 0 0 1.300-1.300V5.600"/><path d="M4 6.300l.3-1.600L8 1l1.300 1.300L5.600 6z" stroke-width="1.100"/></svg></div>
<div class="abtn" style="left:262px;top:358.20px"><svg class="abs" style="left:7px;top:3px;width:8px;height:8px" viewBox="0 0 8 8"><circle cx="4" cy="4" r="3.950" fill="#2b7cff"/><path d="M2.350 2.350l3.300 3.300M5.650 2.350l-3.300 3.300" stroke="#fff" stroke-width="1.250" fill="none"/></svg></div>
<div class="t" style="left:303.5px;top:362.40px;color:#111">Dayshift 10.5</div>
<div class="t" style="left:437.0px;top:362.40px">5</div>
<div class="t" style="left:522.0px;top:362.40px">6</div>
<div class="abs" style="left:297.5px;top:380.5px;width:132.5px;height:27.80000000000001px;background:#ff9b37"></div>
<div class="abs" style="left:297.5px;top:407.8px;width:132.5px;height:1px;background:rgba(235,235,235,0.6)"></div>
<div class="abtn" style="left:234px;top:385.90px"><svg class="abs" style="left:6.500px;top:2.500px;width:10px;height:10px" viewBox="0 0 10 10" fill="none" stroke="#3f82ff" stroke-width="1.300" stroke-linecap="round" stroke-linejoin="round"><path d="M4.600 1.700H2.300A1.300 1.300 0 0 0 1 3v4.700A1.300 1.300 0 0 0 2.300 9H7a1.300 1.300 0 0 0 1.300-1.300V5.600"/><path d="M4 6.300l.3-1.600L8 1l1.300 1.300L5.600 6z" stroke-width="1.100"/></svg></div>
<div class="abtn" style="left:262px;top:385.90px"><svg class="abs" style="left:7px;top:3px;width:8px;height:8px" viewBox="0 0 8 8"><circle cx="4" cy="4" r="3.950" fill="#2b7cff"/><path d="M2.350 2.350l3.300 3.300M5.650 2.350l-3.300 3.300" stroke="#fff" stroke-width="1.250" fill="none"/></svg></div>
<div class="t" style="left:303.5px;top:389.50px;color:#111">Fly Out PM - Dayshift</div>
<div class="t" style="left:437.0px;top:389.50px">1</div>
<div class="t" style="left:522.0px;top:389.50px">7</div>
<div class="t" style="left:599.0px;top:389.50px">3</div>
</div>
<svg class="abs" style="left:586px;top:175px;width:88px;height:248px;z-index:5" viewBox="0 0 88 248"><rect x="3.250" y="3.300" width="79.500" height="240.300" fill="none" stroke="#ff5a0a" stroke-width="2.600"/></svg>
<div class="t cab" style="left:883px;top:426.500px;color:#4d86ea">Back</div>
<div class="t cab" style="left:917px;top:426.500px;color:#4d86ea">Forward</div>
<div class="abs" style="left:221px;top:437px;width:733px;height:1px;background:#a9bccd"></div>
<div class="abs" style="left:221px;top:437px;width:1px;height:92px;background:#e0e0e0"></div>
<div class="abs" style="left:251.0px;top:438px;width:1px;height:52px;background:#dedede"></div>
<div class="abs" style="left:280.9px;top:438px;width:1px;height:52px;background:#dedede"></div>
<div class="abs" style="left:310.7px;top:438px;width:1px;height:52px;background:#dedede"></div>
<div class="abs" style="left:340.8px;top:438px;width:1px;height:52px;background:#dedede"></div>
<div class="abs" style="left:370.9px;top:438px;width:1px;height:52px;background:#dedede"></div>
<div class="abs" style="left:401.3px;top:438px;width:1px;height:52px;background:#dedede"></div>
<div class="abs" style="left:431.9px;top:438px;width:1px;height:52px;background:#dedede"></div>
<div class="abs" style="left:462.2px;top:438px;width:1px;height:52px;background:#dedede"></div>
<div class="abs" style="left:493.1px;top:438px;width:1px;height:52px;background:#dedede"></div>
<div class="abs" style="left:524.2px;top:438px;width:1px;height:52px;background:#dedede"></div>
<div class="abs" style="left:555.2px;top:438px;width:1px;height:52px;background:#dedede"></div>
<div class="abs" style="left:587.0px;top:438px;width:1px;height:52px;background:#dedede"></div>
<div class="abs" style="left:619.7px;top:438px;width:1px;height:52px;background:#dedede"></div>
<div class="abs" style="left:652.2px;top:438px;width:1px;height:52px;background:#dedede"></div>
<div class="abs" style="left:685.2px;top:438px;width:1px;height:52px;background:#dedede"></div>
<div class="abs" style="left:717.6px;top:438px;width:1px;height:52px;background:#dedede"></div>
<div class="abs" style="left:750.1px;top:438px;width:1px;height:52px;background:#dedede"></div>
<div class="abs" style="left:781.3px;top:438px;width:1px;height:52px;background:#dedede"></div>
<div class="abs" style="left:813.0px;top:438px;width:1px;height:52px;background:#dedede"></div>
<div class="abs" style="left:845.5px;top:438px;width:1px;height:52px;background:#dedede"></div>
<div class="abs" style="left:878.0px;top:438px;width:1px;height:52px;background:#dedede"></div>
<div class="abs" style="left:910.8px;top:438px;width:1px;height:52px;background:#dedede"></div>
<div class="abs" style="left:943.5px;top:438px;width:1px;height:52px;background:#dedede"></div>
<svg class="abs" style="left:243.500px;top:458.500px;width:5px;height:4.500px" viewBox="0 0 5 4"><path d="M2.500 0L5 4H0z" fill="#6a78d8"/></svg>
<div class="t" style="left:246.45px;width:40px;text-align:center;top:445.8px;font-size:9.600px;transform:scaleX(0.95);transform-origin:50% 50%;font-weight:bold;color:#111">Th</div>
<div class="t" style="left:246.45px;width:40px;text-align:center;top:458.9px;font-size:9.600px;transform:scaleX(0.95);transform-origin:50% 50%;font-weight:bold;color:#111">23</div>
<div class="t" style="left:246.45px;width:40px;text-align:center;top:471.8px;font-size:9.600px;transform:scaleX(0.95);transform-origin:50% 50%;font-weight:bold;color:#111">Oct</div>
<div class="t" style="left:276.30px;width:40px;text-align:center;top:445.8px;font-size:9.600px;transform:scaleX(0.95);transform-origin:50% 50%;font-weight:bold;color:#111">Fr</div>
<div class="t" style="left:276.30px;width:40px;text-align:center;top:458.9px;font-size:9.600px;transform:scaleX(0.95);transform-origin:50% 50%;font-weight:bold;color:#111">24</div>
<div class="t" style="left:276.30px;width:40px;text-align:center;top:471.8px;font-size:9.600px;transform:scaleX(0.95);transform-origin:50% 50%;font-weight:bold;color:#111">Oct</div>
<div class="t" style="left:306.25px;width:40px;text-align:center;top:445.8px;font-size:9.600px;transform:scaleX(0.95);transform-origin:50% 50%;color:#444">Sa</div>
<div class="t" style="left:306.25px;width:40px;text-align:center;top:458.9px;font-size:9.600px;transform:scaleX(0.95);transform-origin:50% 50%;color:#444">25</div>
<div class="t" style="left:306.25px;width:40px;text-align:center;top:471.8px;font-size:9.600px;transform:scaleX(0.95);transform-origin:50% 50%;color:#444">Oct</div>
<div class="t" style="left:336.35px;width:40px;text-align:center;top:445.8px;font-size:9.600px;transform:scaleX(0.95);transform-origin:50% 50%;color:#444">Su</div>
<div class="t" style="left:336.35px;width:40px;text-align:center;top:458.9px;font-size:9.600px;transform:scaleX(0.95);transform-origin:50% 50%;color:#444">26</div>
<div class="t" style="left:336.35px;width:40px;text-align:center;top:471.8px;font-size:9.600px;transform:scaleX(0.95);transform-origin:50% 50%;color:#444">Oct</div>
<div class="t" style="left:366.60px;width:40px;text-align:center;top:445.8px;font-size:9.600px;transform:scaleX(0.95);transform-origin:50% 50%;font-weight:bold;color:#111">Mo</div>
<div class="t" style="left:366.60px;width:40px;text-align:center;top:458.9px;font-size:9.600px;transform:scaleX(0.95);transform-origin:50% 50%;font-weight:bold;color:#111">27</div>
<div class="t" style="left:366.60px;width:40px;text-align:center;top:471.8px;font-size:9.600px;transform:scaleX(0.95);transform-origin:50% 50%;font-weight:bold;color:#111">Oct</div>
<div class="t" style="left:397.10px;width:40px;text-align:center;top:445.8px;font-size:9.600px;transform:scaleX(0.95);transform-origin:50% 50%;font-weight:bold;color:#111">Tu</div>
<div class="t" style="left:397.10px;width:40px;text-align:center;top:458.9px;font-size:9.600px;transform:scaleX(0.95);transform-origin:50% 50%;font-weight:bold;color:#111">28</div>
<div class="t" style="left:397.10px;width:40px;text-align:center;top:471.8px;font-size:9.600px;transform:scaleX(0.95);transform-origin:50% 50%;font-weight:bold;color:#111">Oct</div>
<div class="t" style="left:427.55px;width:40px;text-align:center;top:445.8px;font-size:9.600px;transform:scaleX(0.95);transform-origin:50% 50%;font-weight:bold;color:#111">We</div>
<div class="t" style="left:427.55px;width:40px;text-align:center;top:458.9px;font-size:9.600px;transform:scaleX(0.95);transform-origin:50% 50%;font-weight:bold;color:#111">29</div>
<div class="t" style="left:427.55px;width:40px;text-align:center;top:471.8px;font-size:9.600px;transform:scaleX(0.95);transform-origin:50% 50%;font-weight:bold;color:#111">Oct</div>
<div class="t" style="left:458.15px;width:40px;text-align:center;top:445.8px;font-size:9.600px;transform:scaleX(0.95);transform-origin:50% 50%;font-weight:bold;color:#111">Th</div>
<div class="t" style="left:458.15px;width:40px;text-align:center;top:458.9px;font-size:9.600px;transform:scaleX(0.95);transform-origin:50% 50%;font-weight:bold;color:#111">30</div>
<div class="t" style="left:458.15px;width:40px;text-align:center;top:471.8px;font-size:9.600px;transform:scaleX(0.95);transform-origin:50% 50%;font-weight:bold;color:#111">Oct</div>
<div class="t" style="left:489.15px;width:40px;text-align:center;top:445.8px;font-size:9.600px;transform:scaleX(0.95);transform-origin:50% 50%;font-weight:bold;color:#111">Fr</div>
<div class="t" style="left:489.15px;width:40px;text-align:center;top:458.9px;font-size:9.600px;transform:scaleX(0.95);transform-origin:50% 50%;font-weight:bold;color:#111">31</div>
<div class="t" style="left:489.15px;width:40px;text-align:center;top:471.8px;font-size:9.600px;transform:scaleX(0.95);transform-origin:50% 50%;font-weight:bold;color:#111">Oct</div>
<div class="t" style="left:520.20px;width:40px;text-align:center;top:445.8px;font-size:9.600px;transform:scaleX(0.95);transform-origin:50% 50%;color:#444">Sa</div>
<div class="t" style="left:520.20px;width:40px;text-align:center;top:458.9px;font-size:9.600px;transform:scaleX(0.95);transform-origin:50% 50%;color:#444">01</div>
<div class="t" style="left:520.20px;width:40px;text-align:center;top:471.8px;font-size:9.600px;transform:scaleX(0.95);transform-origin:50% 50%;color:#444">Nov</div>
<div class="t" style="left:551.60px;width:40px;text-align:center;top:445.8px;font-size:9.600px;transform:scaleX(0.95);transform-origin:50% 50%;color:#444">Su</div>
<div class="t" style="left:551.60px;width:40px;text-align:center;top:458.9px;font-size:9.600px;transform:scaleX(0.95);transform-origin:50% 50%;color:#444">02</div>
<div class="t" style="left:551.60px;width:40px;text-align:center;top:471.8px;font-size:9.600px;transform:scaleX(0.95);transform-origin:50% 50%;color:#444">Nov</div>
<div class="t" style="left:583.85px;width:40px;text-align:center;top:445.8px;font-size:9.600px;transform:scaleX(0.95);transform-origin:50% 50%;font-weight:bold;color:#111">Mo</div>
<div class="t" style="left:583.85px;width:40px;text-align:center;top:458.9px;font-size:9.600px;transform:scaleX(0.95);transform-origin:50% 50%;font-weight:bold;color:#111">03</div>
<div class="t" style="left:583.85px;width:40px;text-align:center;top:471.8px;font-size:9.600px;transform:scaleX(0.95);transform-origin:50% 50%;font-weight:bold;color:#111">Nov</div>
<div class="t" style="left:616.45px;width:40px;text-align:center;top:445.8px;font-size:9.600px;transform:scaleX(0.95);transform-origin:50% 50%;font-weight:bold;color:#111">Tu</div>
<div class="t" style="left:616.45px;width:40px;text-align:center;top:458.9px;font-size:9.600px;transform:scaleX(0.95);transform-origin:50% 50%;font-weight:bold;color:#111">04</div>
<div class="t" style="left:616.45px;width:40px;text-align:center;top:471.8px;font-size:9.600px;transform:scaleX(0.95);transform-origin:50% 50%;font-weight:bold;color:#111">Nov</div>
<div class="t" style="left:649.20px;width:40px;text-align:center;top:445.8px;font-size:9.600px;transform:scaleX(0.95);transform-origin:50% 50%;font-weight:bold;color:#111">We</div>
<div class="t" style="left:649.20px;width:40px;text-align:center;top:458.9px;font-size:9.600px;transform:scaleX(0.95);transform-origin:50% 50%;font-weight:bold;color:#111">05</div>
<div class="t" style="left:649.20px;width:40px;text-align:center;top:471.8px;font-size:9.600px;transform:scaleX(0.95);transform-origin:50% 50%;font-weight:bold;color:#111">Nov</div>
<div class="t" style="left:681.90px;width:40px;text-align:center;top:445.8px;font-size:9.600px;transform:scaleX(0.95);transform-origin:50% 50%;font-weight:bold;color:#111">Th</div>
<div class="t" style="left:681.90px;width:40px;text-align:center;top:458.9px;font-size:9.600px;transform:scaleX(0.95);transform-origin:50% 50%;font-weight:bold;color:#111">06</div>
<div class="t" style="left:681.90px;width:40px;text-align:center;top:471.8px;font-size:9.600px;transform:scaleX(0.95);transform-origin:50% 50%;font-weight:bold;color:#111">Nov</div>
<div class="t" style="left:714.35px;width:40px;text-align:center;top:445.8px;font-size:9.600px;transform:scaleX(0.95);transform-origin:50% 50%;font-weight:bold;color:#111">Fr</div>
<div class="t" style="left:714.35px;width:40px;text-align:center;top:458.9px;font-size:9.600px;transform:scaleX(0.95);transform-origin:50% 50%;font-weight:bold;color:#111">07</div>
<div class="t" style="left:714.35px;width:40px;text-align:center;top:471.8px;font-size:9.600px;transform:scaleX(0.95);transform-origin:50% 50%;font-weight:bold;color:#111">Nov</div>
<div class="t" style="left:746.20px;width:40px;text-align:center;top:445.8px;font-size:9.600px;transform:scaleX(0.95);transform-origin:50% 50%;color:#444">Sa</div>
<div class="t" style="left:746.20px;width:40px;text-align:center;top:458.9px;font-size:9.600px;transform:scaleX(0.95);transform-origin:50% 50%;color:#444">08</div>
<div class="t" style="left:746.20px;width:40px;text-align:center;top:471.8px;font-size:9.600px;transform:scaleX(0.95);transform-origin:50% 50%;color:#444">Nov</div>
<div class="t" style="left:777.65px;width:40px;text-align:center;top:445.8px;font-size:9.600px;transform:scaleX(0.95);transform-origin:50% 50%;color:#444">Su</div>
<div class="t" style="left:777.65px;width:40px;text-align:center;top:458.9px;font-size:9.600px;transform:scaleX(0.95);transform-origin:50% 50%;color:#444">09</div>
<div class="t" style="left:777.65px;width:40px;text-align:center;top:471.8px;font-size:9.600px;transform:scaleX(0.95);transform-origin:50% 50%;color:#444">Nov</div>
<div class="t" style="left:809.75px;width:40px;text-align:center;top:445.8px;font-size:9.600px;transform:scaleX(0.95);transform-origin:50% 50%;font-weight:bold;color:#111">Mo</div>
<div class="t" style="left:809.75px;width:40px;text-align:center;top:458.9px;font-size:9.600px;transform:scaleX(0.95);transform-origin:50% 50%;font-weight:bold;color:#111">10</div>
<div class="t" style="left:809.75px;width:40px;text-align:center;top:471.8px;font-size:9.600px;transform:scaleX(0.95);transform-origin:50% 50%;font-weight:bold;color:#111">Nov</div>
<div class="t" style="left:842.25px;width:40px;text-align:center;top:445.8px;font-size:9.600px;transform:scaleX(0.95);transform-origin:50% 50%;font-weight:bold;color:#111">Tu</div>
<div class="t" style="left:842.25px;width:40px;text-align:center;top:458.9px;font-size:9.600px;transform:scaleX(0.95);transform-origin:50% 50%;font-weight:bold;color:#111">11</div>
<div class="t" style="left:842.25px;width:40px;text-align:center;top:471.8px;font-size:9.600px;transform:scaleX(0.95);transform-origin:50% 50%;font-weight:bold;color:#111">Nov</div>
<div class="t" style="left:874.90px;width:40px;text-align:center;top:445.8px;font-size:9.600px;transform:scaleX(0.95);transform-origin:50% 50%;font-weight:bold;color:#111">We</div>
<div class="t" style="left:874.90px;width:40px;text-align:center;top:458.9px;font-size:9.600px;transform:scaleX(0.95);transform-origin:50% 50%;font-weight:bold;color:#111">12</div>
<div class="t" style="left:874.90px;width:40px;text-align:center;top:471.8px;font-size:9.600px;transform:scaleX(0.95);transform-origin:50% 50%;font-weight:bold;color:#111">Nov</div>
<div class="t" style="left:907.65px;width:40px;text-align:center;top:445.8px;font-size:9.600px;transform:scaleX(0.95);transform-origin:50% 50%;font-weight:bold;color:#111">Th</div>
<div class="t" style="left:907.65px;width:40px;text-align:center;top:458.9px;font-size:9.600px;transform:scaleX(0.95);transform-origin:50% 50%;font-weight:bold;color:#111">13</div>
<div class="t" style="left:907.65px;width:40px;text-align:center;top:471.8px;font-size:9.600px;transform:scaleX(0.95);transform-origin:50% 50%;font-weight:bold;color:#111">Nov</div>
<div class="t" style="left:950.500px;top:471.800px;font-size:9.600px;font-weight:bold;color:#111;width:2.200px;overflow:hidden">N</div>
<div class="abs" style="left:221px;top:491px;width:31px;height:1px;background:#6f8ba8"></div>
<div class="abs" style="left:221px;top:492px;width:31px;height:1px;background:#bcc9d6"></div>
<div class="abs" style="left:252px;top:490px;width:702px;height:1px;background:#6f8ba8"></div>
<div class="abs" style="left:252px;top:491px;width:702px;height:1px;background:#bcc9d6"></div>
<div class="abs" style="left:251.6px;top:491.200px;width:1px;height:27.500px;background:#dedede"></div>
<div class="abs" style="left:281.9px;top:491.200px;width:1px;height:27.500px;background:#dedede"></div>
<div class="abs" style="left:312.6px;top:491.200px;width:1px;height:27.500px;background:#dedede"></div>
<div class="abs" style="left:342.7px;top:491.200px;width:1px;height:27.500px;background:#dedede"></div>
<div class="abs" style="left:373.0px;top:491.200px;width:1px;height:27.500px;background:#dedede"></div>
<div class="abs" style="left:402.8px;top:491.200px;width:1px;height:27.500px;background:#dedede"></div>
<div class="abs" style="left:432.8px;top:491.200px;width:1px;height:27.500px;background:#dedede"></div>
<div class="abs" style="left:464.0px;top:491.200px;width:1px;height:27.500px;background:#dedede"></div>
<div class="abs" style="left:494.7px;top:491.200px;width:1px;height:27.500px;background:#dedede"></div>
<div class="abs" style="left:525.8px;top:491.200px;width:1px;height:27.500px;background:#dedede"></div>
<div class="abs" style="left:557.7px;top:491.200px;width:1px;height:27.500px;background:#dedede"></div>
<div class="abs" style="left:589.3px;top:491.200px;width:1px;height:27.500px;background:#dedede"></div>
<div class="abs" style="left:621.5px;top:491.200px;width:1px;height:27.500px;background:#dedede"></div>
<div class="abs" style="left:654.8px;top:491.200px;width:1px;height:27.500px;background:#dedede"></div>
<div class="abs" style="left:687.1px;top:491.200px;width:1px;height:27.500px;background:#dedede"></div>
<div class="abs" style="left:720.3px;top:491.200px;width:1px;height:27.500px;background:#dedede"></div>
<div class="abs" style="left:752.0px;top:491.200px;width:1px;height:27.500px;background:#dedede"></div>
<div class="abs" style="left:783.7px;top:491.200px;width:1px;height:27.500px;background:#dedede"></div>
<div class="abs" style="left:815.9px;top:491.200px;width:1px;height:27.500px;background:#dedede"></div>
<div class="abs" style="left:848.2px;top:491.200px;width:1px;height:27.500px;background:#dedede"></div>
<div class="abs" style="left:880.7px;top:491.200px;width:1px;height:27.500px;background:#dedede"></div>
<div class="abs" style="left:913.3px;top:491.200px;width:1px;height:27.500px;background:#dedede"></div>
<div class="abs" style="left:946.1px;top:491.200px;width:1px;height:27.500px;background:#dedede"></div>
<div class="abs" style="left:221px;top:518.200px;width:733px;height:1px;background:#e4e4e4"></div>
<div class="abs" style="left:222px;top:519.200px;width:732px;height:9.600px;background:#f6f6f6"></div>
<div class="t" style="left:227.700px;top:500px;font-size:8.500px;letter-spacing:-0.450px;color:#000">Base</div>
<div class="abs" style="left:259px;top:496.300px;width:17px;height:17px;background:#000"></div>
<div class="abs" style="left:261px;top:498.300px;width:13px;height:13px;background:#0ccb98"></div>
<div class="t" style="left:262.55px;top:501.300px;font-size:7.200px;transform:scaleX(0.884);color:#03141e">FIA</div>
<div class="abs" style="left:291.1px;top:498.300px;width:13.3px;height:13px;background:#1592ff"></div>
<div class="t" style="left:293.30px;top:501.300px;font-size:7.200px;transform:scaleX(0.890);color:#03141e">DS</div>
<div class="abs" style="left:321.8px;top:498.300px;width:12.7px;height:13px;background:#1592ff"></div>
<div class="t" style="left:323.70px;top:501.300px;font-size:7.200px;transform:scaleX(0.890);color:#03141e">DS</div>
<div class="abs" style="left:351.9px;top:498.300px;width:12.9px;height:13px;background:#1592ff"></div>
<div class="t" style="left:353.90px;top:501.300px;font-size:7.200px;transform:scaleX(0.890);color:#03141e">DS</div>
<div class="abs" style="left:382.2px;top:498.300px;width:12.4px;height:13px;background:#1592ff"></div>
<div class="t" style="left:383.95px;top:501.300px;font-size:7.200px;transform:scaleX(0.890);color:#03141e">DS</div>
<div class="abs" style="left:412.0px;top:498.300px;width:12.6px;height:13px;background:#1592ff"></div>
<div class="t" style="left:413.85px;top:501.300px;font-size:7.200px;transform:scaleX(0.890);color:#03141e">DS</div>
<div class="abs" style="left:442.0px;top:498.300px;width:13.8px;height:13px;background:#ff9b37"></div>
<div class="t" style="left:442.50px;top:501.300px;font-size:7.200px;transform:scaleX(0.865);color:#03141e">FOP</div>
<div class="abs" style="left:473.2px;top:498.300px;width:13.3px;height:13px;background:#3f6b92"></div>
<div class="t" style="left:475.05px;top:501.300px;font-size:7.200px;transform:scaleX(0.923);color:#ffffff">RR</div>
<div class="abs" style="left:503.9px;top:498.300px;width:13.7px;height:13px;background:#3f6b92"></div>
<div class="t" style="left:505.95px;top:501.300px;font-size:7.200px;transform:scaleX(0.923);color:#ffffff">RR</div>
<div class="abs" style="left:535.0px;top:498.300px;width:14.5px;height:13px;background:#3f6b92"></div>
<div class="t" style="left:537.45px;top:501.300px;font-size:7.200px;transform:scaleX(0.923);color:#ffffff">RR</div>
<div class="abs" style="left:566.9px;top:498.300px;width:14.2px;height:13px;background:#3f6b92"></div>
<div class="t" style="left:569.20px;top:501.300px;font-size:7.200px;transform:scaleX(0.923);color:#ffffff">RR</div>
<div class="abs" style="left:598.5px;top:498.300px;width:14.8px;height:13px;background:#3f6b92"></div>
<div class="t" style="left:601.10px;top:501.300px;font-size:7.200px;transform:scaleX(0.923);color:#ffffff">RR</div>
<div class="abs" style="left:630.7px;top:498.300px;width:15.9px;height:13px;background:#3f6b92"></div>
<div class="t" style="left:633.85px;top:501.300px;font-size:7.200px;transform:scaleX(0.923);color:#ffffff">RR</div>
<div class="abs" style="left:664.0px;top:498.300px;width:14.9px;height:13px;background:#3f6b92"></div>
<div class="t" style="left:666.65px;top:501.300px;font-size:7.200px;transform:scaleX(0.923);color:#ffffff">RR</div>
<div class="abs" style="left:696.3px;top:498.300px;width:15.8px;height:13px;background:#0ccb98"></div>
<div class="t" style="left:699.25px;top:501.300px;font-size:7.200px;transform:scaleX(0.884);color:#03141e">FIA</div>
<div class="abs" style="left:729.5px;top:498.300px;width:14.3px;height:13px;background:#1592ff"></div>
<div class="t" style="left:732.20px;top:501.300px;font-size:7.200px;transform:scaleX(0.890);color:#03141e">DS</div>
<div class="abs" style="left:761.2px;top:498.300px;width:14.3px;height:13px;background:#1592ff"></div>
<div class="t" style="left:763.90px;top:501.300px;font-size:7.200px;transform:scaleX(0.890);color:#03141e">DS</div>
<div class="abs" style="left:792.9px;top:498.300px;width:14.8px;height:13px;background:#1592ff"></div>
<div class="t" style="left:795.85px;top:501.300px;font-size:7.200px;transform:scaleX(0.890);color:#03141e">DS</div>
<div class="abs" style="left:825.1px;top:498.300px;width:14.9px;height:13px;background:#1592ff"></div>
<div class="t" style="left:828.10px;top:501.300px;font-size:7.200px;transform:scaleX(0.890);color:#03141e">DS</div>
<div class="abs" style="left:857.4px;top:498.300px;width:15.1px;height:13px;background:#1592ff"></div>
<div class="t" style="left:860.50px;top:501.300px;font-size:7.200px;transform:scaleX(0.890);color:#03141e">DS</div>
<div class="abs" style="left:889.9px;top:498.300px;width:15.2px;height:13px;background:#ff9b37"></div>
<div class="t" style="left:891.10px;top:501.300px;font-size:7.200px;transform:scaleX(0.865);color:#03141e">FOP</div>
<div class="abs" style="left:922.5px;top:498.300px;width:15.4px;height:13px;background:#0ccb98"></div>
<div class="t" style="left:925.25px;top:501.300px;font-size:7.200px;transform:scaleX(0.884);color:#03141e">FIA</div>
<div class="abs" style="left:221.500px;top:511px;width:30.500px;height:10px;background:#fff"></div>
<svg class="abs" style="left:223px;top:512.500px;width:27px;height:7px" viewBox="0 0 27 7"><path d="M5 0V7L.5 3.500z" fill="#888"/><circle cx="12.500" cy="3.500" r="2.800" fill="#888"/><path d="M20 0V7l4.500-3.500z" fill="#888"/></svg>
<svg class="abs" style="left:223px;top:521px;width:6px;height:6.500px" viewBox="0 0 6 6.500"><path d="M5.500 0V6.500L.5 3.250z" fill="#888"/></svg>
<div class="abs" style="left:233.500px;top:521.300px;width:510px;height:5.800px;background:#858585;border-radius:3px"></div>
<svg class="abs" style="left:946px;top:520.700px;width:5px;height:6.500px" viewBox="0 0 5 6.500"><path d="M.3 0V6.500L5 3.250z" fill="#888"/></svg>
<div class="abs" style="left:221px;top:529px;width:733px;height:1.300px;background:#4a4a4a"></div>
<div class="t" style="left:809px;top:538.8px;font-size:9px;letter-spacing:-0.499px;color:#777;">First</div>
<div class="t" style="left:843.3px;top:538.8px;font-size:9px;letter-spacing:-0.46px;color:#777;">Previous</div>
<div class="t" style="left:894px;top:538.8px;font-size:9px;letter-spacing:-0.569px;color:#777;">Next</div>
<div class="t" style="left:930px;top:538.8px;font-size:9px;letter-spacing:-0.67px;color:#777;">Last</div>
<div class="frame" style="left:0;top:0;width:976px;height:1px;background:#5a8da8"></div>
<div class="frame" style="left:0;top:1px;width:976px;height:1px;background:#125b81"></div>
<div class="frame" style="left:0;top:0;width:1px;height:552px;background:#5a8da8"></div>
<div class="frame" style="left:1px;top:1px;width:1px;height:551px;background:#125b81"></div>
<div class="frame" style="left:973px;top:32px;width:1px;height:518px;background:rgba(18,90,128,0.3)"></div>
<div class="frame" style="left:974px;top:1px;width:1px;height:551px;background:#125b81"></div>
<div class="frame" style="left:975px;top:0px;width:1px;height:552px;background:#2f7496"></div>
<div class="frame" style="left:0;top:550px;width:976px;height:2px;background:#0f587e"></div>
<div class="frame" style="left:0;top:0;width:1px;height:1px;background:#e8eef2"></div>
</body></html>
